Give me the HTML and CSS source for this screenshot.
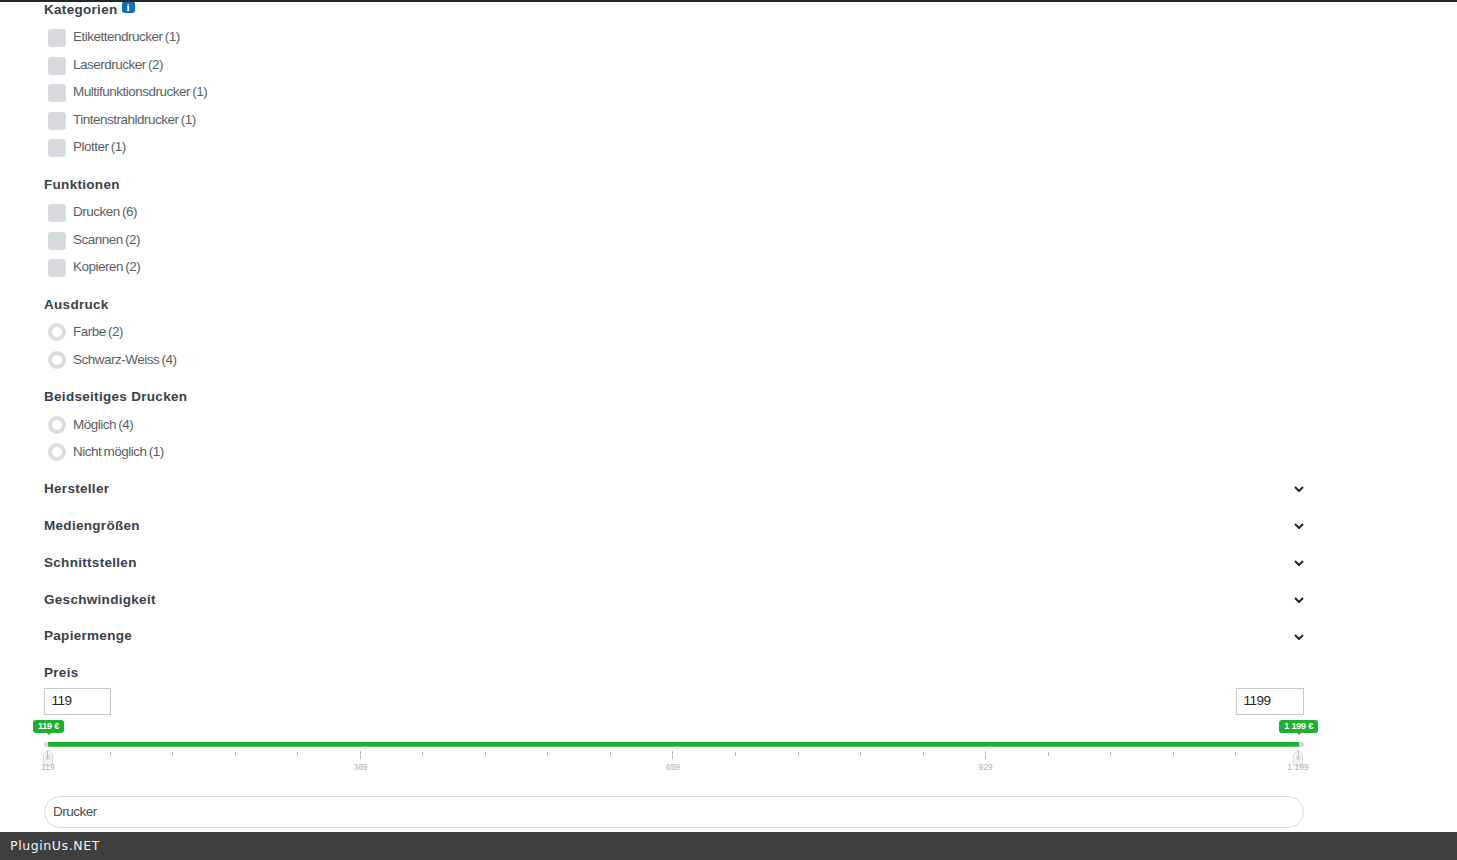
FILE: index.html
```html
<!DOCTYPE html>
<html lang="de">
<head>
<meta charset="utf-8">
<title>Drucker Filter</title>
<link rel="stylesheet" href="styles.css">
</head>
<body>
<div class="topline"></div>
<main class="filters">
  <section class="group">
    <h3 class="title">Kategorien <span class="info">i</span></h3>
    <label class="row"><span class="check"></span><span class="lab">Etikettendrucker (1)</span></label>
    <label class="row"><span class="check"></span><span class="lab">Laserdrucker (2)</span></label>
    <label class="row"><span class="check"></span><span class="lab">Multifunktionsdrucker (1)</span></label>
    <label class="row"><span class="check"></span><span class="lab">Tintenstrahldrucker (1)</span></label>
    <label class="row"><span class="check"></span><span class="lab">Plotter (1)</span></label>
  </section>
  <section class="group">
    <h3 class="title">Funktionen</h3>
    <label class="row"><span class="check"></span><span class="lab">Drucken (6)</span></label>
    <label class="row"><span class="check"></span><span class="lab">Scannen (2)</span></label>
    <label class="row"><span class="check"></span><span class="lab">Kopieren (2)</span></label>
  </section>
  <section class="group">
    <h3 class="title">Ausdruck</h3>
    <label class="row"><span class="radio"></span><span class="lab">Farbe (2)</span></label>
    <label class="row"><span class="radio"></span><span class="lab">Schwarz-Weiss (4)</span></label>
  </section>
  <section class="group">
    <h3 class="title">Beidseitiges Drucken</h3>
    <label class="row"><span class="radio"></span><span class="lab">Möglich (4)</span></label>
    <label class="row"><span class="radio"></span><span class="lab">Nicht möglich (1)</span></label>
  </section>
  <section class="group fold"><h3 class="title">Hersteller</h3><svg class="chev" viewBox="0 0 10 6"><path d="M1 1l4 4 4-4"/></svg></section>
  <section class="group fold"><h3 class="title">Mediengrößen</h3><svg class="chev" viewBox="0 0 10 6"><path d="M1 1l4 4 4-4"/></svg></section>
  <section class="group fold"><h3 class="title">Schnittstellen</h3><svg class="chev" viewBox="0 0 10 6"><path d="M1 1l4 4 4-4"/></svg></section>
  <section class="group fold"><h3 class="title">Geschwindigkeit</h3><svg class="chev" viewBox="0 0 10 6"><path d="M1 1l4 4 4-4"/></svg></section>
  <section class="group fold"><h3 class="title">Papiermenge</h3><svg class="chev" viewBox="0 0 10 6"><path d="M1 1l4 4 4-4"/></svg></section>
  <section class="price">
    <h3 class="title">Preis</h3>
    <div class="inputs">
      <input class="num num-a" value="119">
      <input class="num num-b" value="1199">
    </div>
    <div class="slider">
      <span class="badge badge-a">119 €</span>
      <span class="badge badge-b">1 199 €</span>
      <div class="track"><div class="fill"></div></div>
      <svg class="handle handle-a" viewBox="0 0 10 17"><path d="M.5 5.500L5 .5l4.500 5v9.500a1.500 1.500 0 0 1-1.500 1.500H2A1.500 1.500 0 0 1 .5 15z"/><path class="grip" d="M4 6v5M6 6v5"/></svg>
      <svg class="handle handle-b" viewBox="0 0 10 17"><path d="M.5 5.500L5 .5l4.500 5v9.500a1.500 1.500 0 0 1-1.500 1.500H2A1.500 1.500 0 0 1 .5 15z"/><path class="grip" d="M4 6v5M6 6v5"/></svg>
      <div class="ticks">
        <i class="major"></i><i></i><i></i><i></i><i></i><i class="major"></i><i></i><i></i><i></i><i></i><i class="major"></i><i></i><i></i><i></i><i></i><i class="major"></i><i></i><i></i><i></i><i></i><i class="major"></i>
      </div>
      <div class="labels"><span>119</span><span>389</span><span>659</span><span>929</span><span>1 199</span></div>
    </div>
  </section>
  <input class="search" value="Drucker">
</main>
<footer class="foot">PluginUs.NET</footer>
</body>
</html>
```
FILE: styles.css
```css
* { box-sizing: border-box; }
html, body { margin: 0; padding: 0; height: 860px; overflow: hidden; background: #fff; }
body { font-family: "Liberation Sans", Arial, sans-serif; color: #555; }

.topline { position: fixed; top: 0; left: 0; right: 0; height: 2px; background: #212529; z-index: 3; }

.filters { width: 1304px; padding-left: 44px; margin-top: -4.5px; }

.group { margin-bottom: 10px; }
.title {
  margin: 0; height: 27.5px; line-height: 27.5px;
  font-size: 13.5px; font-weight: 700; letter-spacing: 0.3px; color: #3a4149;
}
.info {
  display: inline-block; width: 13px; height: 12px; margin-left: 0;
  position: relative; top: -3px;
  border-radius: 3px; background: #0d6ebd; color: #fff;
  font: 700 11px/12px "Liberation Serif", serif; text-align: center; letter-spacing: 0;
}

.row { display: flex; height: 27.5px; padding-left: 4px; align-items: center; }
.check, .radio { flex: none; width: 18px; height: 18px; margin-right: 7px; }
.check { margin-top: 2.6px; background: #d6dbde; border-radius: 3px; }
.radio { margin-top: 1px; border: 4px solid #d9dde0; border-radius: 50%; background: #fff; }
.lab { font-size: 13.5px; letter-spacing: -0.5px; word-spacing: -1px; color: #5a5f64; margin-bottom: 0.4px; }

.fold { display: flex; justify-content: space-between; align-items: center; height: 26.8px; }
.chev { width: 10px; height: 6px; margin-top: 1px; fill: none; stroke: #212529; stroke-width: 2; }

.price { width: 1260px; }
.inputs { display: flex; justify-content: space-between; margin-top: 1.5px; }
.num {
  height: 27px; padding: 0 6.5px 2px; border: 1px solid #c8c8c8; border-radius: 0;
  font: 13.5px "Liberation Sans", sans-serif; letter-spacing: -0.5px; color: #212529; background: #fff;
}
.num-a { width: 67px; }
.num-b { width: 68px; }

.slider { position: relative; height: 81px; }
.badge {
  position: absolute; top: 5px; height: 13px; padding: 0 5px;
  background: #1fb02f; color: #fff; border-radius: 3px;
  font-size: 9px; letter-spacing: -0.2px; line-height: 12px; font-weight: 700; white-space: nowrap;
}
.badge::after {
  content: ""; position: absolute; left: 50%; bottom: -2px; margin-left: -2px;
  border: 2px solid transparent; border-top-color: #1fb02f; border-bottom: 0;
}
.badge-a { left: -11px; }
.badge-b { right: -14px; }
.track { position: absolute; left: 0; right: 0; top: 27px; height: 5px; background: #d3d9e0; border-radius: 2px; }
.fill { position: absolute; left: 4px; right: 5px; top: 0; height: 5px; background: #1fb02f; border-bottom: 1px solid #5cc867; }
.handle { position: absolute; top: 34px; width: 10px; height: 17px; fill: #f4f4f4; stroke: #d8d8d8; stroke-width: 1; }
.handle .grip { stroke: #ccc; fill: none; }
.handle-a { left: -1px; }
.handle-b { right: 1px; }
.ticks { position: absolute; left: 3px; right: 5px; top: 37px; display: flex; justify-content: space-between; }
.ticks i { display: block; width: 1px; height: 4px; background: #bbb; }
.ticks i.major { height: 8px; margin-top: -1px; }
.labels { position: absolute; left: -21px; right: -19px; top: 48px; display: flex; justify-content: space-between; }
.labels span { width: 50px; text-align: center; font-size: 8.5px; line-height: 9px; color: #b0b0b0; }

.search {
  display: block; width: 1260px; height: 32px; padding: 0 8px 2px;
  border: 1px solid #dcdcdc; border-radius: 16px; background: #fff;
  font: 13.5px "Liberation Sans", sans-serif; letter-spacing: -0.5px; color: #495057; outline: 0;
}

.foot {
  position: fixed; left: 0; right: 0; bottom: 0; height: 28px; padding-left: 10px;
  background: #3f3f3f; color: #f4f4f4;
  font: 12.5px/27px "DejaVu Sans", sans-serif; letter-spacing: 0.6px; z-index: 3;
}
```
